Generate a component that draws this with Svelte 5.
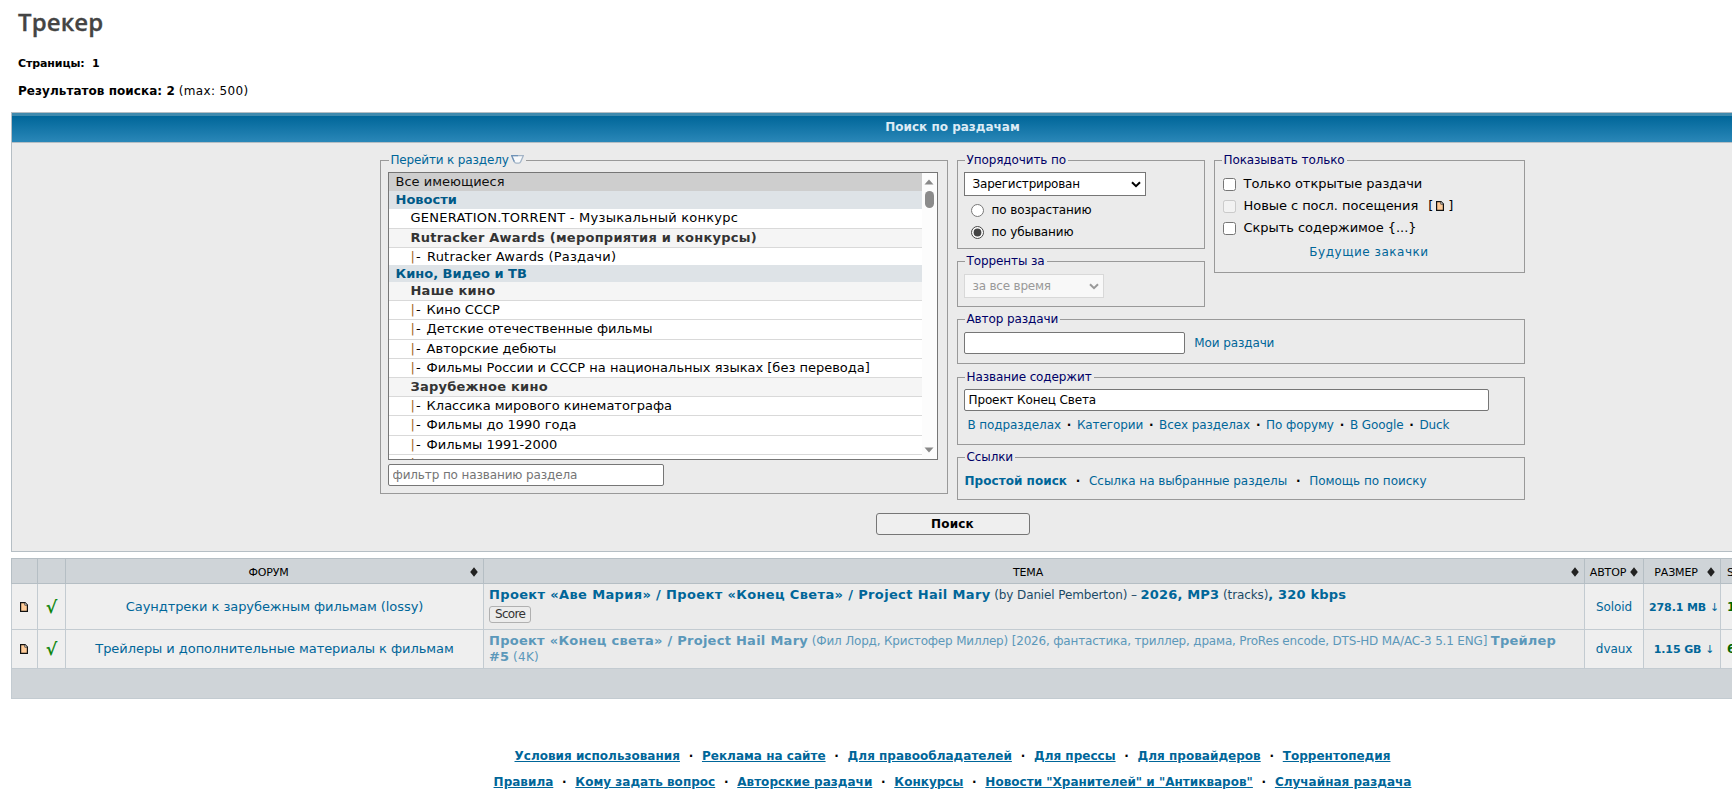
<script lang="ts">
  const forums = [
    { type: "all", name: "Все имеющиеся", height: 18 },
    { type: "cat", name: "Новости", height: 18 },
    { type: "forum", name: "GENERATION.TORRENT - Музыкальный конкурс", height: 20 },
    { type: "root", name: "Rutracker Awards (мероприятия и конкурсы)", height: 19 },
    { type: "sub last", name: "Rutracker Awards (Раздачи)", height: 17 },
    { type: "cat", name: "Кино, Видео и ТВ", height: 17 },
    { type: "root", name: "Наше кино", height: 19 },
    { type: "sub", name: "Кино СССР", height: 19 },
    { type: "sub", name: "Детские отечественные фильмы", height: 20 },
    { type: "sub", name: "Авторские дебюты", height: 19 },
    { type: "sub", name: "Фильмы России и СССР на национальных языках [без перевода]", height: 19 },
    { type: "root", name: "Зарубежное кино", height: 19 },
    { type: "sub", name: "Классика мирового кинематографа", height: 19 },
    { type: "sub", name: "Фильмы до 1990 года", height: 20 },
    { type: "sub", name: "Фильмы 1991-2000", height: 19 },
    { type: "sub", name: "Фильмы 2001-2005", height: 19 },
  ];

  const searchIn = ["В подразделах", "Категории", "Всех разделах", "По форуму", "В Google", "Duck"];

  const footer = [
    ["Условия использования", "Реклама на сайте", "Для правообладателей", "Для прессы", "Для провайдеров", "Торрентопедия"],
    ["Правила", "Кому задать вопрос", "Авторские раздачи", "Конкурсы", 'Новости "Хранителей" и "Антикваров"', "Случайная раздача"],
  ];

  let order = "desc";
  let title = "Проект Конец Света";
</script>

{#snippet doc()}
  <svg class="doc" width="8" height="10" viewBox="0 0 8 10">
    <path d="M.6.6H5L7.4 3v6.4H.6z" fill="#ffcc99" stroke="#111" stroke-width="1.2" />
    <path d="M4.8.8v2.4h2.4" fill="#fff" stroke="#111" stroke-width=".7" />
  </svg>
{/snippet}

{#snippet sorter()}
  <svg class="sorter" width="8" height="10" viewBox="0 0 8 10">
    <path d="M4 0.3 7.8 4.9H0.2zM4 9.7 0.2 4.9h7.6z" fill="#222" />
  </svg>
{/snippet}

<div class="page">
  <h1>Трекер</h1>
  <p class="pages">Страницы:&nbsp; 1</p>
  <p class="found"><b>Результатов поиска: 2</b> <span>(max: 500)</span></p>

  <form class="search" onsubmit={(e) => e.preventDefault()}>
    <h2>Поиск по раздачам</h2>
    <div class="body">
      <div class="columns">
        <fieldset class="sections">
          <legend>
            <a href="#f">Перейти к разделу</a>
            <svg class="expand" width="13" height="9" viewBox="0 0 13 9">
              <path d="M.7.7h11.6L9.8 6.6q-.7 1.6-2 1.6H5.2q-1.3 0-2-1.6z" fill="#f7f9fb" stroke="#a3b4c6" stroke-width="1.3" />
              <path d="M7 .7H.7l2.5 5.9" fill="none" stroke="#6f93b8" stroke-width="1.2" />
            </svg>
          </legend>
          <div class="list">
            <ul>
              {#each forums as f}
                <li class={f.type} style="height: {f.height}px">
                  {#if f.type.startsWith("sub")}<i>|</i><s>-</s>{/if}{f.name}
                </li>
              {/each}
            </ul>
            <div class="scrollbar">
              <svg width="10" height="6" viewBox="0 0 10 6"><path d="M5 .5 9.5 5.5h-9z" fill="#888" /></svg>
              <span class="thumb"></span>
              <svg class="down" width="10" height="6" viewBox="0 0 10 6"><path d="M5 5.5.5.5h9z" fill="#888" /></svg>
            </div>
          </div>
          <input class="filter" type="text" placeholder="фильтр по названию раздела" />
        </fieldset>

        <div class="options">
          <div class="top">
            <div class="left">
              <fieldset class="sort">
                <legend>Упорядочить по</legend>
                <div class="select">Зарегистрирован
                  <svg width="10" height="7" viewBox="0 0 10 7"><path d="M1 1.2 5 5.2 9 1.2" fill="none" stroke="currentColor" stroke-width="2" /></svg>
                </div>
                <label><input type="radio" bind:group={order} value="asc" />по возрастанию</label>
                <label><input type="radio" bind:group={order} value="desc" />по убыванию</label>
              </fieldset>
              <fieldset class="period">
                <legend>Торренты за</legend>
                <div class="select disabled">за все время
                  <svg width="10" height="7" viewBox="0 0 10 7"><path d="M1 1.2 5 5.2 9 1.2" fill="none" stroke="currentColor" stroke-width="2" /></svg>
                </div>
              </fieldset>
            </div>
            <fieldset class="only">
              <legend>Показывать только</legend>
              <label><input type="checkbox" />Только открытые раздачи</label>
              <label><input type="checkbox" disabled />Новые с посл. посещения <span class="new">[{@render doc()}]</span></label>
              <label><input type="checkbox" />Скрыть содержимое {"{...}"}</label>
              <a class="future" href="#future">Будущие закачки</a>
            </fieldset>
          </div>

          <fieldset class="author">
            <legend>Автор раздачи</legend>
            <input type="text" />
            <a href="#my">Мои раздачи</a>
          </fieldset>

          <fieldset class="name">
            <legend>Название содержит</legend>
            <input type="text" bind:value={title} />
            <p>
              {#each searchIn as link, i}
                {#if i}<span class="dot">·</span>{/if}<a href="#in">{link}</a>
              {/each}
            </p>
          </fieldset>

          <fieldset class="links">
            <legend>Ссылки</legend>
            <p>
              <a href="#simple"><b>Простой поиск</b></a><span class="dot">·</span><a href="#link">Ссылка на выбранные разделы</a><span class="dot">·</span><a href="#help">Помощь по поиску</a>
            </p>
          </fieldset>
        </div>
      </div>
      <button type="submit">Поиск</button>
    </div>
  </form>

  <table>
    <colgroup>
      <col style="width: 26px" /><col style="width: 28px" /><col style="width: 418px" /><col style="width: 1101px" />
      <col style="width: 59px" /><col style="width: 77px" /><col />
    </colgroup>
    <thead>
      <tr>
        <th></th>
        <th></th>
        <th><div><span>ФОРУМ</span>{@render sorter()}</div></th>
        <th><div><span>ТЕМА</span>{@render sorter()}</div></th>
        <th><div><span>АВТОР</span>{@render sorter()}</div></th>
        <th><div><span>РАЗМЕР</span>{@render sorter()}</div></th>
        <th class="seeds"><div>S</div></th>
      </tr>
    </thead>
    <tbody>
      <tr class="r1">
        <td>{@render doc()}</td>
        <td class="ok">√</td>
        <td class="forum"><a href="#f1">Саундтреки к зарубежным фильмам (lossy)</a></td>
        <td class="topic">
          <a href="#t1"><b>Проект «Аве Мария» / Проект «Конец Света» / Project Hail Mary</b> <span>(by Daniel Pemberton) –</span> <b class="tight">2026, MP3</b> <span>(tracks)</span><b class="tight">, 320 kbps</b></a>
          <div><span class="tag">Score</span></div>
        </td>
        <td class="user"><a href="#u1">Soloid</a></td>
        <td class="size"><a href="#d1">278.1 MB <i>↓</i></a></td>
        <td class="seeds">1</td>
      </tr>
      <tr class="r2">
        <td>{@render doc()}</td>
        <td class="ok">√</td>
        <td class="forum"><a href="#f2">Трейлеры и дополнительные материалы к фильмам</a></td>
        <td class="topic seen">
          <a href="#t2"><b>Проект «Конец света» / Project Hail Mary</b> <span>(Фил Лорд, Кристофер Миллер) [2026, фантастика, триллер, драма, ProRes encode, DTS-HD MA/AC-3 5.1 ENG]</span> <b class="tight">Трейлер<br />#5</b> <span class="wide">(4K)</span></a>
        </td>
        <td class="user"><a href="#u2">dvaux</a></td>
        <td class="size"><a href="#d2">1.15 GB <i>↓</i></a></td>
        <td class="seeds">6</td>
      </tr>
    </tbody>
    <tfoot>
      <tr><td colspan="7"></td></tr>
    </tfoot>
  </table>

  <footer>
    {#each footer as row}
      <p>
        {#each row as link, i}
          {#if i}<span>·</span>{/if}<a href="#info">{link}</a>
        {/each}
      </p>
    {/each}
  </footer>
</div>

<style>
  :global(html),
  :global(body) {
    overflow: hidden;
    background: #fff;
  }

  .page {
    box-sizing: border-box;
    width: 1894px;
    height: 811px;
    padding-left: 11px;
    overflow: hidden;
    font: 12px/16px "DejaVu Sans", Verdana, sans-serif;
    letter-spacing: -0.1px;
    color: #000;
  }

  a {
    color: #069;
    text-decoration: none;
  }

  h1 {
    margin: 6px 0 0 7px;
    font: 600 24px/32px "Open Sans", sans-serif;
    letter-spacing: 0.1px;
    -webkit-text-stroke: 0.3px #444;
    color: #444;
  }

  p {
    margin: 0;
  }

  .pages {
    margin: 18px 0 0 7px;
    font-weight: bold;
    font-size: 11px;
  }

  .found {
    margin: 11px 0 0 7px;
    letter-spacing: 0.05px;
  }

  .found span {
    letter-spacing: 0.35px;
  }

  .search {
    height: 440px;
    box-sizing: border-box;
    margin-top: 13px;
    border: 1px solid #b5bec4;
    background: #ebebeb;
  }

  h2 {
    margin: 0;
    height: 29px;
    box-sizing: border-box;
    border-top: 3px solid #3f8aae;
    background: linear-gradient(#006699, #2a87b8);
    font-size: 12px;
    line-height: 22px;
    letter-spacing: 0;
    text-align: center;
    color: #dcebf5;
  }

  .body {
    display: flex;
    flex-direction: column;
    align-items: center;
    border-top: 1px solid #b5bec4;
    padding-top: 8px;
  }

  .columns {
    display: flex;
    align-items: flex-start;
    gap: 9px;
    width: 1146px;
  }

  fieldset {
    box-sizing: border-box;
    min-width: 0;
    margin: 0;
    padding: 3px 6px 0;
    border: 1px solid #999;
  }

  legend {
    margin-left: 1px;
    padding: 0 2px;
    line-height: 18px;
    color: #000066;
  }

  .sections {
    width: 568px;
    height: 343px;
    padding-left: 7px;
  }

  .sections legend {
    display: flex;
    align-items: center;
    letter-spacing: -0.15px;
  }

  .expand {
    margin: -1px 0 0 2px;
  }

  .list {
    display: flex;
    box-sizing: border-box;
    width: 550px;
    height: 288px;
    border: 1px solid #767676;
    background: #fff;
    overflow: hidden;
  }

  .list ul {
    flex: 1;
    margin: 0;
    padding: 0;
    list-style: none;
    font-size: 13px;
    letter-spacing: 0;
  }

  .list li {
    box-sizing: border-box;
    padding-left: 22px;
    border-bottom: 1px solid #d9d9d9;
    line-height: 18px;
    white-space: nowrap;
  }

  .list .all,
  .list .cat {
    padding-left: 7px;
    border-bottom: 0;
  }

  .list .all {
    background: #cecece;
    color: #101010;
  }

  .list .cat {
    background: #dee3e7;
    font-weight: bold;
    color: #005a88;
  }

  .list .forum {
    letter-spacing: 0.24px;
  }

  .list .root {
    background: #f5f5f5;
    font-weight: bold;
    letter-spacing: 0.24px;
    color: #333;
  }

  .list .last {
    border-bottom: 0;
    letter-spacing: 0.2px;
  }

  .list i {
    margin-right: 1px;
    font-style: normal;
    color: #a8692a;
  }

  .list s {
    margin-right: 6px;
    text-decoration: none;
  }

  .scrollbar {
    display: flex;
    flex-direction: column;
    align-items: center;
    width: 15px;
    padding: 6px 0;
    background: #fcfcfc;
    box-sizing: border-box;
  }

  .thumb {
    width: 9px;
    height: 17px;
    margin-top: 6px;
    border-radius: 5px;
    background: #8b8b8b;
  }

  .scrollbar .down {
    margin-top: auto;
  }

  input[type="text"] {
    box-sizing: border-box;
    height: 22px;
    margin: 0;
    padding: 1px 4px;
    border: 1px solid #767676;
    border-radius: 2px;
    background: #fff;
    font: inherit;
    letter-spacing: -0.12px;
    color: #000;
  }

  input::placeholder {
    color: #757575;
  }

  .sections .filter {
    display: block;
    width: 276px;
    margin-top: 4px;
  }

  .options {
    width: 568px;
  }

  .top {
    display: flex;
    align-items: flex-start;
    justify-content: space-between;
  }

  .left {
    width: 248px;
  }

  .sort {
    height: 98px;
  }

  .period {
    height: 55px;
    margin-top: 3px;
  }

  .select {
    display: flex;
    align-items: center;
    justify-content: space-between;
    box-sizing: border-box;
    width: 182px;
    height: 24px;
    padding: 0 4px 0 8px;
    border: 1px solid #767676;
    background: #fff;
    letter-spacing: -0.2px;
  }

  .select.disabled {
    width: 140px;
    border-color: #d8d8d8;
    background: #f8f8f8;
    color: #999;
  }

  .period .select {
    margin-top: 1px;
  }

  label {
    display: flex;
    align-items: center;
    height: 22px;
  }

  .sort label {
    padding-left: 7px;
  }

  .sort .select {
    margin-bottom: 3px;
  }

  input[type="radio"],
  input[type="checkbox"] {
    width: 13px;
    height: 13px;
    margin: 0 8px 0 0;
    accent-color: #444;
  }

  .only {
    width: 311px;
    height: 122px;
  }

  .only label {
    padding-left: 2px;
    font-size: 13px;
    letter-spacing: -0.05px;
  }

  .only label:first-of-type {
    margin-top: 1px;
  }

  .new {
    display: flex;
    align-items: center;
    margin-left: 10px;
  }

  .new .doc {
    margin: 0 4px 0 3px;
  }

  .future {
    display: block;
    margin-top: 5px;
    text-align: center;
    letter-spacing: 0.52px;
  }

  .author {
    height: 54px;
    margin-top: 3px;
    padding-top: 4px;
  }

  .author input {
    width: 221px;
  }

  .author a {
    margin-left: 6px;
  }

  .name {
    height: 77px;
    margin-top: 4px;
  }

  .name input {
    width: 525px;
  }

  .name p {
    display: flex;
    margin: 6px 0 0 4px;
  }

  .dot {
    font-weight: bold;
    text-align: center;
  }

  .name .dot {
    width: 16px;
  }

  .links {
    height: 52px;
    margin-top: 3px;
    padding-top: 7px;
  }

  .links p {
    display: flex;
    padding-left: 1px;
    letter-spacing: -0.03px;
  }

  .links .dot {
    width: 22px;
  }

  .links b {
    letter-spacing: 0.04px;
  }

  button {
    width: 154px;
    height: 22px;
    margin-top: 13px;
    padding: 0;
    border: 1px solid #767676;
    border-radius: 3px;
    background: #efefef;
    font: bold 12px "DejaVu Sans", Verdana, sans-serif;
    letter-spacing: 0.2px;
  }

  table {
    width: 1883px;
    margin-top: 6px;
    border-collapse: collapse;
    table-layout: fixed;
  }

  th,
  td {
    padding: 0;
    border: 1px solid #c3cbd1;
    text-align: center;
  }

  th {
    height: 24px;
    border-color: #b5bec4;
    background: #cfd4d8;
    font-weight: normal;
    font-size: 11px;
    letter-spacing: -0.15px;
  }

  th div {
    display: flex;
    align-items: center;
    padding: 3px 5px 0 1px;
  }

  th.seeds div {
    padding-left: 0;
  }

  th span {
    flex: 1;
  }

  .sorter {
    margin-top: -1px;
  }

  td {
    background: #efefef;
    vertical-align: middle;
  }

  .r1 td {
    height: 45px;
  }

  .r2 td {
    height: 38px;
  }

  tfoot td {
    height: 29px;
    background: #cfd4d8;
  }

  td .doc {
    display: block;
    margin: 0 auto;
    transform: translateX(-1px);
  }

  .ok {
    font-size: 17px;
    -webkit-text-stroke: 0.4px #008000;
    color: #008000;
  }

  td.forum {
    font-size: 13px;
    letter-spacing: -0.06px;
  }

  .topic {
    padding-left: 5px;
    background: #ebebeb;
    text-align: left;
  }

  .topic b {
    font-size: 13px;
    letter-spacing: 0.36px;
  }

  .seen b {
    letter-spacing: 0.27px;
  }

  .topic b.tight {
    letter-spacing: 0.18px;
  }

  .topic span {
    letter-spacing: -0.12px;
    color: #1c4a66;
  }

  .topic.seen span {
    letter-spacing: -0.18px;
    color: inherit;
  }

  .topic.seen .wide {
    letter-spacing: 0.3px;
  }

  .topic div {
    display: flex;
    padding: 3px 0 3px;
  }

  .topic .tag {
    box-sizing: border-box;
    height: 17px;
    padding: 0 5px;
    border: 1px solid #b0b0b0;
    border-radius: 3px;
    background: #ececec;
    line-height: 15px;
    letter-spacing: -0.7px;
    color: #333;
  }

  .seen a {
    color: #5b98ba;
  }

  .size {
    background: #ebebeb;
    font-weight: bold;
    font-size: 11px;
  }

  .size a {
    display: block;
    padding: 2px 0 0 4px;
  }

  .size i {
    font-style: normal;
    font-weight: normal;
  }

  .seeds {
    padding-left: 6px;
    text-align: left;
  }

  td.seeds {
    font-weight: bold;
    color: #006600;
  }

  footer {
    padding-top: 49px;
    font-weight: bold;
    letter-spacing: 0.02px;
  }

  footer p {
    display: flex;
    justify-content: center;
    height: 26px;
  }

  footer span {
    width: 22px;
    text-align: center;
  }

  footer a {
    text-decoration: underline;
  }
</style>
